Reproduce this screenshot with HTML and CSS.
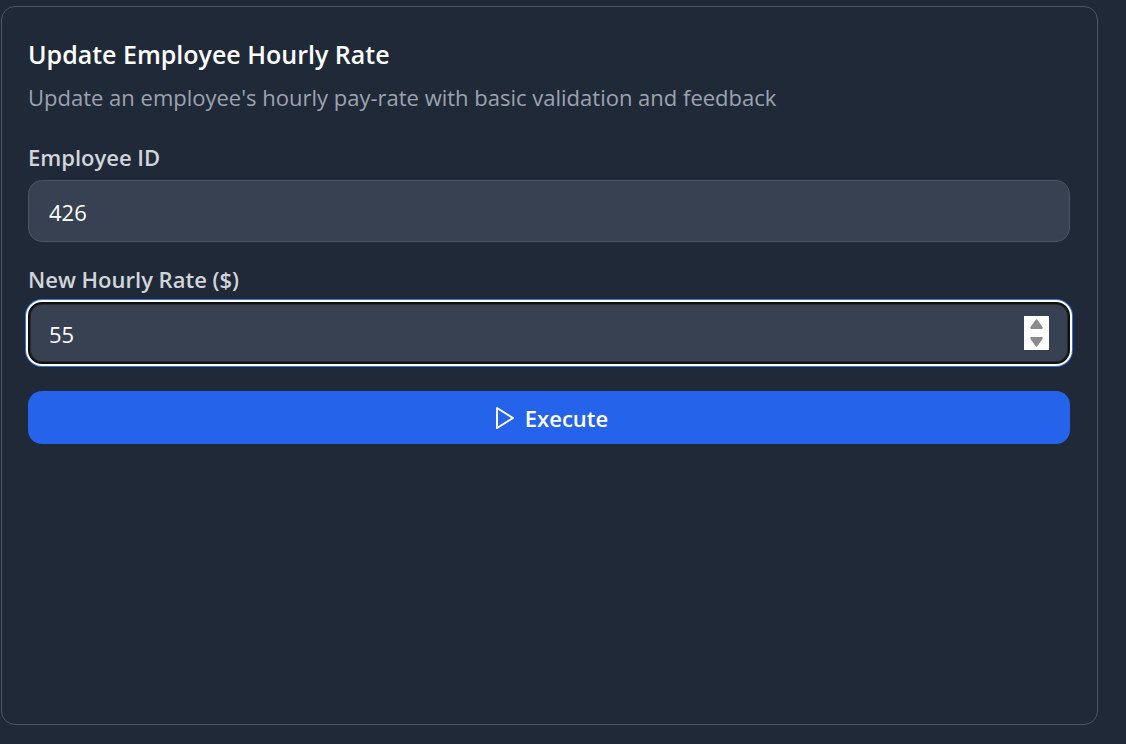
FILE: index.html
```html
<!DOCTYPE html>
<html lang="en">
<head>
<meta charset="utf-8">
<meta name="viewport" content="width=device-width, initial-scale=1">
<title>Update Employee Hourly Rate</title>
<link rel="stylesheet" href="styles.css">
</head>
<body class="page">
<form class="card">
  <h1 class="title">Update Employee Hourly Rate</h1>
  <p class="subtitle">Update an employee's hourly pay-rate with basic validation and feedback</p>
  <div class="field">
    <label class="label" for="employee-id">Employee ID</label>
    <div class="control">
      <input class="input" id="employee-id" type="number" value="426">
    </div>
  </div>
  <div class="field">
    <label class="label" for="hourly-rate">New Hourly Rate ($)</label>
    <div class="control control-active">
      <input class="input" id="hourly-rate" type="number" value="55">
      <div class="stepper">
        <button class="step" type="button" aria-label="Increase rate">
          <svg width="13" height="11" viewBox="0 0 13 11"><path d="M7.500 .9 12.500 8Q13.300 10 11.500 10H1.500Q-.3 10 .5 8L5.500 .9Q6.500 -.2 7.500 .9Z" fill="#8b8b8b"/></svg>
        </button>
        <button class="step" type="button" aria-label="Decrease rate">
          <svg width="13" height="11" viewBox="0 0 13 11"><path d="M1.500 1H11.500Q13.300 1 12.500 3L7.500 10.100Q6.500 11.200 5.500 10.100L.5 3Q-.3 1 1.500 1Z" fill="#8b8b8b"/></svg>
        </button>
      </div>
    </div>
  </div>
  <button class="execute" type="button">
    <svg width="20" height="24" viewBox="0 0 20 24" fill="none" stroke="#fff" stroke-width="2" stroke-linejoin="round" aria-hidden="true"><path d="M2 2V22L18 12Z"/></svg>
    <span>Execute</span>
  </button>
</form>
</body>
</html>
```
FILE: styles.css
```css
* { box-sizing: border-box; }

.page {
  display: flex;
  min-height: 100vh;
  margin: 0;
  padding: 6px 28px 19px 1px;
  background: #202938;
  color: #fff;
  font-family: "Segoe UI", "Open Sans", "Noto Sans", sans-serif;
}

.card {
  flex: 1;
  min-width: 0;
  padding: 27px 27px 26px 26px;
  border: 1px solid #4b5563;
  border-radius: 14px;
}

.title {
  margin: 0;
  font-size: 25px;
  font-weight: 600;
  line-height: 40px;
}

.subtitle {
  margin: 7px 0 28px;
  color: #9ca3af;
  font-size: 22px;
  line-height: 32px;
}

.field { margin-bottom: 21px; }

.label {
  display: block;
  margin-bottom: 7px;
  color: #d1d5db;
  font-size: 22px;
  font-weight: 600;
  line-height: 32px;
}

.control {
  display: flex;
  align-items: center;
  height: 62px;
  padding: 0 20px;
  border: 1px solid #4b5563;
  border-radius: 14px;
  background: #384152;
}

.control-active {
  padding: 0 19px;
  border: 2px solid #101010;
  box-shadow: 0 0 0 2px #fff, 0 0 0 3px #3b73c8, inset 0 0 0 1px #252a33;
}

.input {
  flex: 1;
  min-width: 0;
  padding: 2px 0 0;
  border: 0;
  outline: 0;
  background: transparent;
  color: #fff;
  font: inherit;
  font-size: 22px;
  line-height: 32px;
  appearance: textfield;
}

.input::-webkit-inner-spin-button { display: none; }

.stepper {
  display: grid;
  grid-template-rows: 1fr 1fr;
  width: 25px;
  height: 34px;
  background: #fcfcfc;
}

.step {
  display: flex;
  align-items: center;
  justify-content: center;
  padding: 0;
  border: 0;
  background: transparent;
}

.execute {
  display: flex;
  align-items: center;
  justify-content: center;
  gap: 10px;
  width: 100%;
  height: 53px;
  margin-top: 27px;
  padding: 0 0 0 5px;
  border: 0;
  border-radius: 14px;
  background: #2563eb;
  color: #fff;
  font: inherit;
  font-size: 22px;
  font-weight: 600;
}
```
